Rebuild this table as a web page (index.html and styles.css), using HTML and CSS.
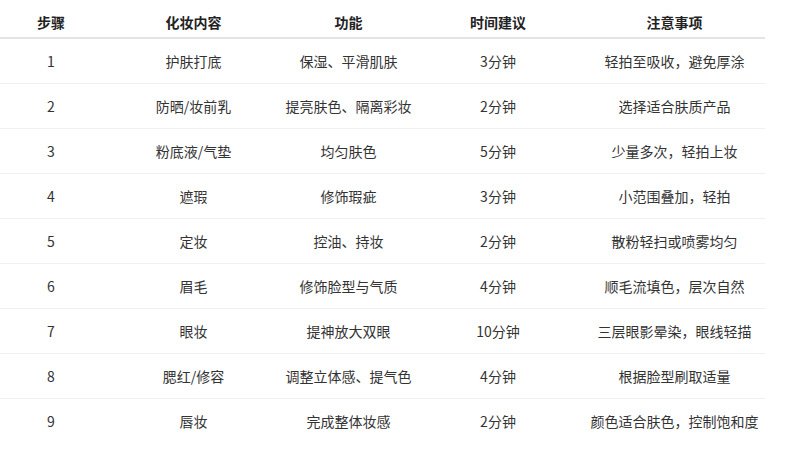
FILE: index.html
```html
<!DOCTYPE html>
<html lang="zh-CN">
<head>
<meta charset="utf-8">
<title>化妆步骤</title>
<link rel="stylesheet" href="styles.css">
</head>
<body>
<table class="steps">
  <colgroup>
    <col class="c1"><col class="c2"><col class="c3"><col class="c4"><col class="c5">
  </colgroup>
  <thead>
    <tr><th>步骤</th><th>化妆内容</th><th>功能</th><th>时间建议</th><th>注意事项</th></tr>
  </thead>
  <tbody>
    <tr><td>1</td><td>护肤打底</td><td>保湿、平滑肌肤</td><td>3分钟</td><td>轻拍至吸收，避免厚涂</td></tr>
    <tr><td>2</td><td>防晒/妆前乳</td><td>提亮肤色、隔离彩妆</td><td>2分钟</td><td>选择适合肤质产品</td></tr>
    <tr><td>3</td><td>粉底液/气垫</td><td>均匀肤色</td><td>5分钟</td><td>少量多次，轻拍上妆</td></tr>
    <tr><td>4</td><td>遮瑕</td><td>修饰瑕疵</td><td>3分钟</td><td>小范围叠加，轻拍</td></tr>
    <tr><td>5</td><td>定妆</td><td>控油、持妆</td><td>2分钟</td><td>散粉轻扫或喷雾均匀</td></tr>
    <tr><td>6</td><td>眉毛</td><td>修饰脸型与气质</td><td>4分钟</td><td>顺毛流填色，层次自然</td></tr>
    <tr><td>7</td><td>眼妆</td><td>提神放大双眼</td><td>10分钟</td><td>三层眼影晕染，眼线轻描</td></tr>
    <tr><td>8</td><td>腮红/修容</td><td>调整立体感、提气色</td><td>4分钟</td><td>根据脸型刷取适量</td></tr>
    <tr><td>9</td><td>唇妆</td><td>完成整体妆感</td><td>2分钟</td><td>颜色适合肤色，控制饱和度</td></tr>
  </tbody>
</table>
</body>
</html>
```
FILE: styles.css
```css
html, body {
  margin: 0;
  padding: 0;
  background: #ffffff;
}
body {
  font-family: "Noto Sans CJK SC", "Noto Sans", sans-serif;
  font-size: 14px;
  color: #333333;
}
.steps {
  width: 765px;
  border-collapse: collapse;
  table-layout: fixed;
}
.c1 { width: 102px; }
.c2 { width: 183px; }
.c3 { width: 127px; }
.c4 { width: 172px; }
.c5 { width: 181px; }
.steps th,
.steps td {
  text-align: center;
  line-height: 20px;
  padding: 0;
  white-space: nowrap;
}
.steps th {
  font-weight: 700;
  color: #222222;
  padding-top: 12px;
  padding-bottom: 5px;
  border-bottom: 2px solid #e4e4e4;
}
.steps td {
  padding-top: 12px;
  padding-bottom: 12px;
  border-bottom: 1px solid #f0f0f0;
}
.steps tbody tr:last-child td {
  border-bottom: none;
}
```
